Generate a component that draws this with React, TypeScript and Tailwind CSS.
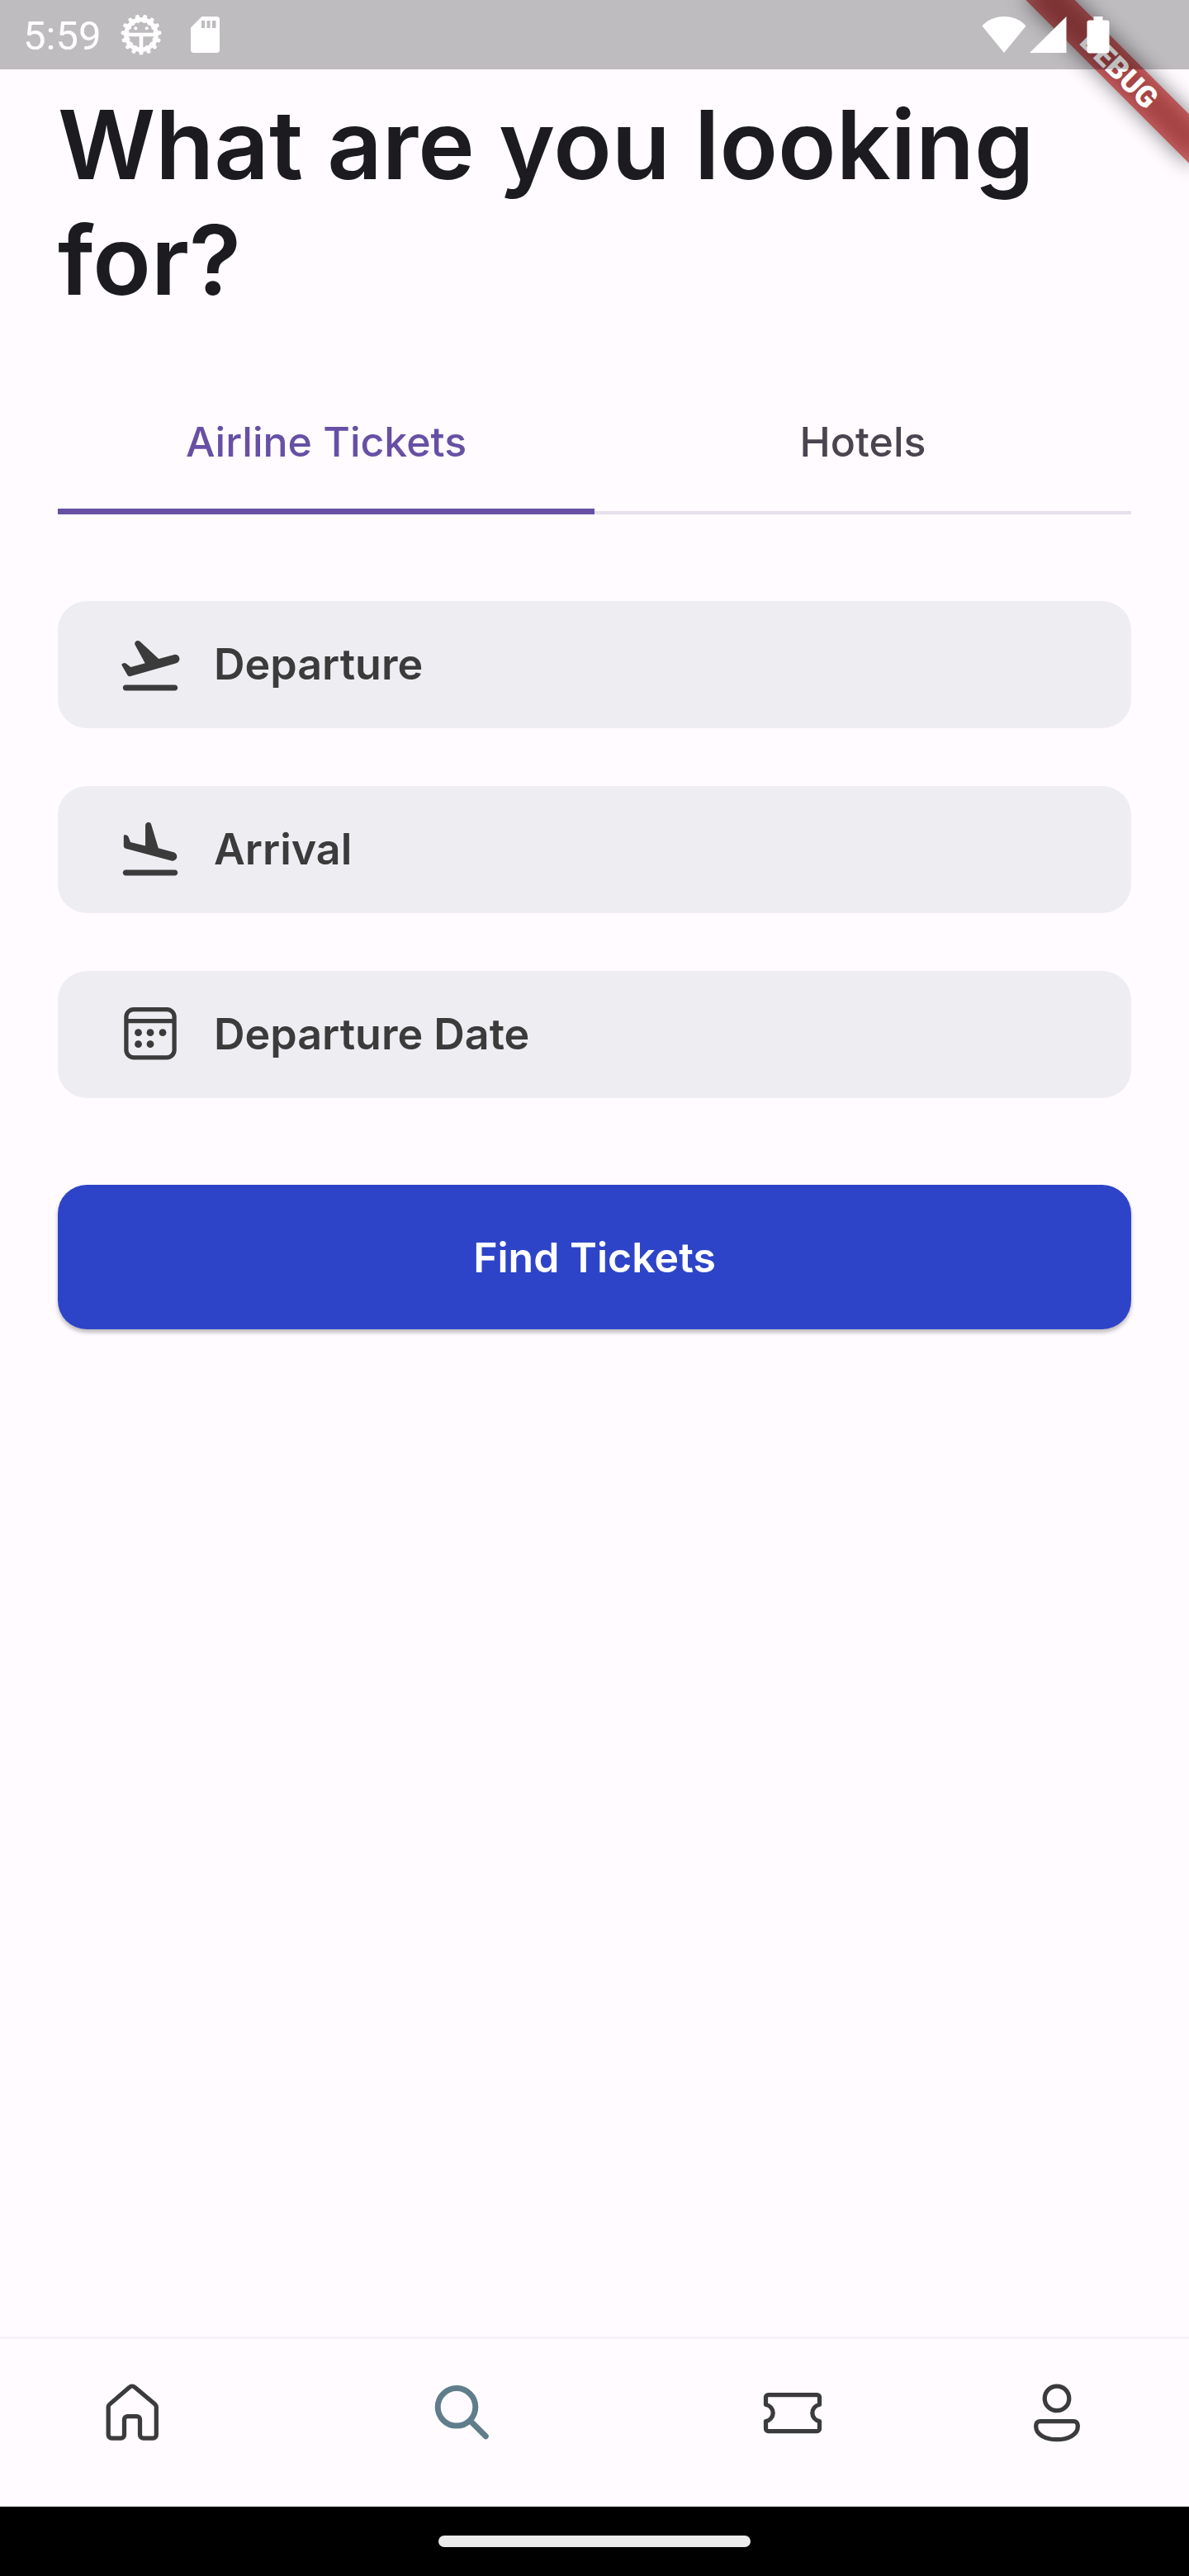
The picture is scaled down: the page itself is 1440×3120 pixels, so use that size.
import { useState } from "react";
import type { ReactNode } from "react";

const gearTeeth = Array.from({ length: 15 }, (_, i) => 90 + i * 24);

function GearIcon() {
  return (
    <svg width="50" height="50" viewBox="-25 -25 50 50" aria-hidden="true">
      <g stroke="#fff" strokeWidth="5" strokeLinecap="round">
        {gearTeeth.map((angle) => (
          <line key={angle} x1="17" y1="0" x2="22.1" y2="0" transform={`rotate(${angle})`} />
        ))}
      </g>
      <circle r="18.3" fill="none" stroke="#fff" strokeWidth="5.2" />
      <path d="M-17 0H17M0 0V17" stroke="#fff" strokeWidth="4.6" fill="none" />
      <circle cx="-6.7" cy="-7.7" r="2" fill="#fff" />
      <circle cx="6.7" cy="-7.7" r="2" fill="#fff" />
    </svg>
  );
}

function SdCardIcon() {
  return (
    <svg width="35" height="44" viewBox="0 0 35 44" aria-hidden="true">
      <path
        fill="#fff"
        fillRule="evenodd"
        d="M13.5 0H31a4 4 0 0 1 4 4v36a4 4 0 0 1-4 4H4a4 4 0 0 1-4-4V13.5ZM13 5v9h4V5Zm6.5 0v9h4V5Zm6.5 0v9h4.5V5Z"
      />
    </svg>
  );
}

function StatusSignals() {
  return (
    <div className="flex items-center gap-1">
      <svg width="54" height="46" viewBox="0 0 54 46" aria-label="Wi-Fi">
        <path fill="#fff" d="M0.5 12.5C7 5 16 1 27 1s20 4 26.5 11.5L27 45Z" />
      </svg>
      <svg width="45" height="46" viewBox="0 0 45 46" aria-label="Mobile signal">
        <path fill="#fff" d="M0 45H44.5V1Z" />
      </svg>
      <svg width="28" height="46" viewBox="0 0 28 46" className="ml-5" aria-label="Battery">
        <path
          fill="#fff"
          d="M8.5 1H19.5V5.5H24.5a3 3 0 0 1 3 3V42.5a3 3 0 0 1-3 3H3.5a3 3 0 0 1-3-3V8.5a3 3 0 0 1 3-3H8.5Z"
        />
      </svg>
    </div>
  );
}

function DebugRibbon() {
  return (
    <svg
      className="pointer-events-none absolute top-0 right-0"
      width="340"
      height="340"
      viewBox="0 0 340 340"
      aria-label="Debug banner"
    >
      <defs>
        <filter id="ribbon-shadow" x="-50%" y="-200%" width="200%" height="500%">
          <feGaussianBlur stdDeviation="13" />
        </filter>
      </defs>
      <g transform="translate(256 84) rotate(45)">
        <rect x="-140" y="-21" width="280" height="42" fill="#000" fillOpacity="0.5" filter="url(#ribbon-shadow)" />
        <rect x="-140" y="-21" width="280" height="42" fill="#b71c1c" fillOpacity="0.63" />
        <text
          x="0"
          y="13"
          textAnchor="middle"
          fill="#fff"
          fontFamily="Roboto, sans-serif"
          fontSize="36"
          fontWeight="900"
        >
          DEBUG
        </text>
      </g>
    </svg>
  );
}

function TakeoffIcon() {
  return (
    <svg className="size-[84px] shrink-0" viewBox="0 0 24 24" fill="currentColor" aria-hidden="true">
      <path d="M20.5 19h-17c-.55 0-1 .45-1 1s.45 1 1 1h17c.55 0 1-.45 1-1s-.45-1-1-1zm1.57-9.36c-.22-.8-1.04-1.27-1.84-1.06L14.92 10 8.46 3.98c-.27-.25-.64-.35-.99-.26-.66.18-1.01.9-.71 1.51l3.44 6.3-4.97 1.33-1.54-1.21a1 1 0 0 0-.87-.18l-.33.09c-.32.08-.47.45-.3.73l1.88 3.25c.23.39.69.58 1.12.47L21 11.48c.8-.22 1.28-1.04 1.07-1.84z" />
    </svg>
  );
}

function LandingIcon() {
  return (
    <svg className="size-[84px] shrink-0" viewBox="0 0 24 24" fill="currentColor" aria-hidden="true">
      <path d="M20.5 19h-17c-.55 0-1 .45-1 1s.45 1 1 1h17c.55 0 1-.45 1-1s-.45-1-1-1zM3.51 11.61l15.83 4.24c.8.21 1.62-.26 1.84-1.06.21-.8-.26-1.62-1.06-1.84l-5.31-1.42-2.48-8.25a1.04 1.04 0 0 0-.73-.7c-.65-.18-1.3.32-1.3 1v7.11L5.15 9.4l-.72-1.81a1.01 1.01 0 0 0-.67-.59l-.33-.09c-.32-.09-.63.15-.63.48v3.25c0 .46.29.86.71.97z" />
    </svg>
  );
}

function CalendarIcon() {
  return (
    <svg className="size-[84px] shrink-0" viewBox="0 0 84 84" fill="none" aria-hidden="true">
      <rect x="12.9" y="11.6" width="58.2" height="58.2" rx="9" stroke="currentColor" strokeWidth="5.25" />
      <path d="M13 25.5H71" stroke="currentColor" strokeWidth="5.25" />
      <g fill="currentColor">
        <circle cx="27.5" cy="39.7" r="4.4" />
        <circle cx="42" cy="39.7" r="4.4" />
        <circle cx="57" cy="39.7" r="4.4" />
        <circle cx="27.5" cy="53.7" r="4.4" />
        <circle cx="42" cy="53.7" r="4.4" />
      </g>
    </svg>
  );
}

function NavIcon({ children, width = 5.25 }: { children: ReactNode; width?: number }) {
  return (
    <svg
      className="size-[84px]"
      viewBox="0 0 84 84"
      fill="none"
      stroke="currentColor"
      strokeWidth={width}
      strokeLinecap="round"
      strokeLinejoin="round"
      aria-hidden="true"
    >
      {children}
    </svg>
  );
}

const navItems = [
  {
    label: "Home",
    icon: (
      <NavIcon>
        <path d="M38.9 11.3a4.5 4.5 0 0 1 6.2 0L69.8 32.1a4.5 4.5 0 0 1 1.5 3.4V69a4 4 0 0 1-4 4H55.5a4 4 0 0 1-4-4V50.5a4 4 0 0 0-4-4h-11a4 4 0 0 0-4 4V69a4 4 0 0 1-4 4H17.2a4 4 0 0 1-4-4V35.5a4.5 4.5 0 0 1 1.5-3.4Z" />
      </NavIcon>
    ),
  },
  {
    label: "Search",
    icon: (
      <NavIcon width={7}>
        <circle cx="35" cy="35.3" r="22.8" />
        <path d="M52 52.5 70.3 70.7" />
      </NavIcon>
    ),
  },
  {
    label: "Tickets",
    icon: (
      <NavIcon>
        <path d="M12.5 20.5h59a3 3 0 0 1 3 3V32.5a10.1 10.1 0 0 0 0 20V61.5a3 3 0 0 1-3 3h-59a3 3 0 0 1-3-3V52.5a10.1 10.1 0 0 0 0-20V23.5a3 3 0 0 1 3-3Z" />
      </NavIcon>
    ),
  },
  {
    label: "Profile",
    icon: (
      <NavIcon>
        <circle cx="42" cy="24.9" r="14.8" />
        <path d="M21.7 52.5h40.6a5 5 0 0 1 5 5v1.5c0 9.5-11.3 15.7-25.3 15.7s-25.3-6.2-25.3-15.7v-1.5a5 5 0 0 1 5-5Z" />
      </NavIcon>
    ),
  },
];

const tabs = ["Airline Tickets", "Hotels"];

function SearchField({ label, icon }: { label: string; icon: ReactNode }) {
  return (
    <label className="flex h-[154px] items-center gap-[35px] rounded-[35px] bg-[#eeeef2] px-[70px] text-[#3b3b3b]">
      {icon}
      <input
        type="text"
        aria-label={label}
        placeholder={label}
        className="min-w-0 flex-1 bg-transparent text-[52px] leading-[70px] font-semibold outline-none placeholder:text-[#3b3b3b] placeholder:opacity-100"
      />
    </label>
  );
}

export default function App() {
  const [tab, setTab] = useState(0);
  const [page, setPage] = useState(1);

  return (
    <div className="relative flex min-h-screen flex-col overflow-x-hidden bg-[#fffbff] font-['Inter',sans-serif] text-[#1c1b1f]">
      <DebugRibbon />

      <header className="relative flex h-[84px] items-center justify-between bg-black/25 pr-24 pl-7 text-white">
        <div className="flex items-center">
          <time className="pt-1 font-['Roboto',sans-serif] text-[49px] leading-[56px] font-normal">5:59</time>
          <span className="ml-6">
            <GearIcon />
          </span>
          <span className="ml-[35px]">
            <SdCardIcon />
          </span>
        </div>
        <StatusSignals />
      </header>

      <main className="flex flex-1 flex-col px-[70px] pt-[21px]">
        <h1 className="text-[116px] leading-[140px] font-semibold">What are you looking for?</h1>

        <div role="tablist" className="mt-[63px] grid grid-cols-2 shadow-[inset_0_-4px_0_#e7e0ec]">
          {tabs.map((label, index) => (
            <button
              key={label}
              type="button"
              role="tab"
              aria-selected={tab === index}
              onClick={() => setTab(index)}
              className={
                tab === index
                  ? "h-[175px] border-b-[7px] border-[#6750a4] pt-[5px] text-[50px] leading-[70px] font-medium text-[#6750a4]"
                  : "h-[175px] border-b-[7px] border-transparent pt-[5px] text-[50px] leading-[70px] font-medium text-[#49454f]"
              }
            >
              {label}
            </button>
          ))}
        </div>

        <form className="mt-[105px] flex flex-col gap-[70px]" onSubmit={(event) => event.preventDefault()}>
          <SearchField label="Departure" icon={<TakeoffIcon />} />
          <SearchField label="Arrival" icon={<LandingIcon />} />
          <SearchField label="Departure Date" icon={<CalendarIcon />} />
          <button
            type="submit"
            className="mt-[35px] h-[175px] rounded-[35px] bg-[#2e44c8] text-[50px] leading-[70px] font-semibold text-white shadow-[0_4px_5px_rgba(0,0,0,0.25)]"
          >
            Find Tickets
          </button>
        </form>
      </main>

      <nav className="grid h-[206px] grid-cols-[2fr_3fr_2fr_2fr] border-t-[3px] border-[#f7f2f7]">
        {navItems.map((item, index) => (
          <button
            key={item.label}
            type="button"
            aria-label={item.label}
            onClick={() => setPage(index)}
            className={
              page === index
                ? "flex justify-center pt-[47px] text-[#607d8b]"
                : "flex justify-center pt-[47px] text-[#3b3b3b]"
            }
          >
            {item.icon}
          </button>
        ))}
      </nav>

      <footer className="flex h-[84px] items-center justify-center bg-black">
        <span className="h-3.5 w-[378px] rounded-full bg-[#ebebeb]" />
      </footer>
    </div>
  );
}
